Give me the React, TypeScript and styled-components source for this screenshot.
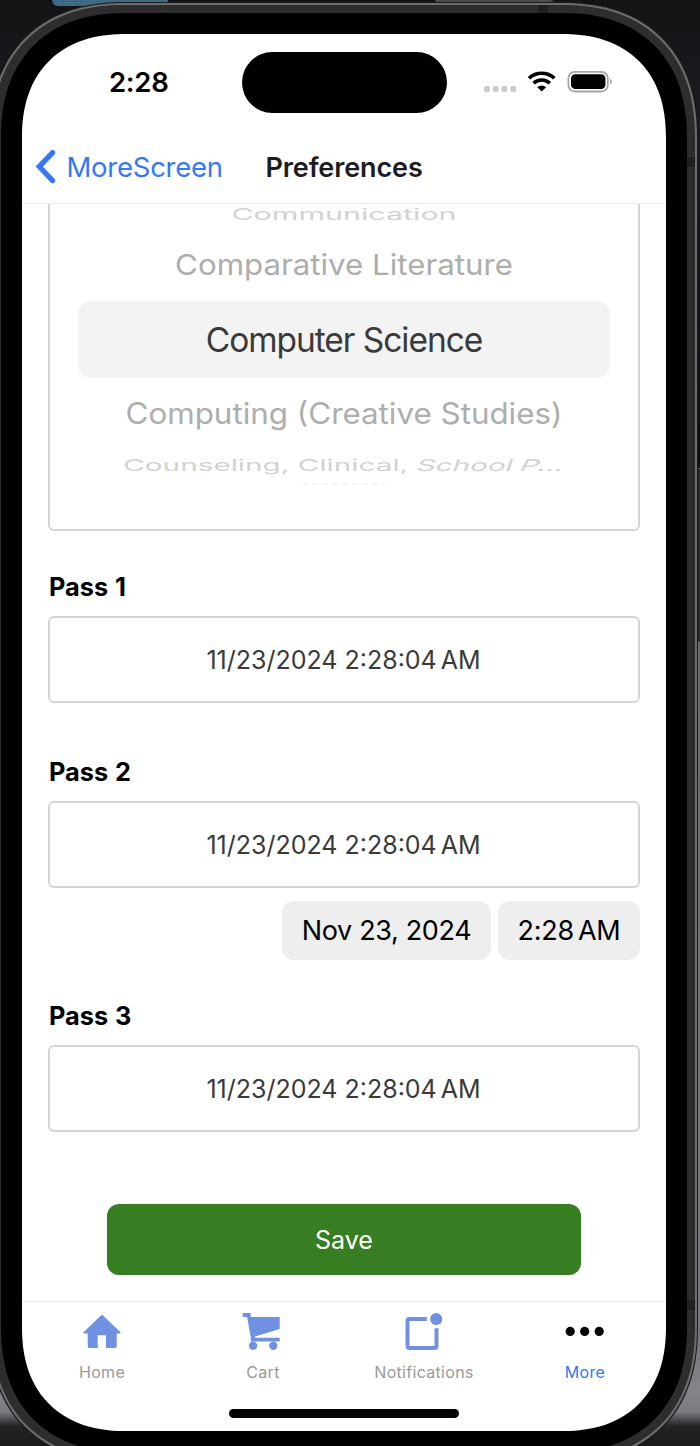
import React from "react";
import styled, { createGlobalStyle } from "styled-components";

const Global = createGlobalStyle`
  * { box-sizing: border-box; }
  html, body { margin: 0; background: #141316; }
  body { font-family: Inter, "Liberation Sans", sans-serif; }
`;

const Desktop = styled.div`
  position: relative;
  width: 700px;
  height: 1446px;
  overflow: hidden;
  background: linear-gradient(180deg, #131215 0, #1b1a1e 100px, #0e0d10 468px, #666 468px, #666 469px, #262626 469px, #262626 641px, #6c6c6c 642px, #77767a 1340px, #858488 1390px, #7b7a7e 1412px, #242226 1426px, #1a191c 1446px);
`;

const Peek = styled.div<{ $x: number; $w: number; $h: number; $c: string }>`
  position: absolute;
  top: 0;
  left: ${(p) => p.$x}px;
  width: ${(p) => p.$w}px;
  height: ${(p) => p.$h}px;
  background: ${(p) => p.$c};
  border-radius: 0 0 6px 6px;
`;

/* Continuous corners where the browser has them, plain arcs otherwise. */
const Rounded = styled.div<{ $arc: number; $smooth: number }>`
  border-radius: ${(p) => p.$arc}px;
  @supports (corner-shape: superellipse(1.2)) {
    border-radius: ${(p) => p.$smooth}px;
    corner-shape: superellipse(1.2);
  }
`;

const Chassis = styled(Rounded)`
  position: relative;
  width: 707px;
  height: 1459px;
  margin: 3px 0 0 -10px;
  border: 2px solid #6c6c6c;
  background: #2d2d2d;
  padding: 8px 8px 8px 9px;
  box-shadow: 0 0 0 1px #1b1b1b;
`;

const Antenna = styled.div<{ $x: number; $y: number; $w: number; $h: number }>`
  position: absolute;
  left: ${(p) => p.$x}px;
  top: ${(p) => p.$y}px;
  width: ${(p) => p.$w}px;
  height: ${(p) => p.$h}px;
  background: #1f1f1f;
`;

const Bezel = styled(Rounded)`
  height: 100%;
  background: #000;
  padding: 21px;
`;

const Screen = styled(Rounded)`
  width: 644px;
  height: 1397px;
  background: #fff;
  overflow: hidden;
  display: flex;
  flex-direction: column;
`;

const StatusBar = styled.div`
  height: 97px;
  flex: none;
  display: flex;
  align-items: flex-start;
  padding-top: 18px;
`;

const Clock = styled.div`
  width: 219.5px;
  padding-left: 87px;
  padding-top: 13px;
  font-size: 27.5px;
  line-height: 34px;
  font-weight: 600;
  letter-spacing: -0.3px;
`;

const Island = styled.div`
  width: 205px;
  height: 61px;
  border-radius: 31px;
  background: #000;
`;

const Signals = styled.svg`
  margin: 17px 0 0 36.5px;
  display: block;
`;

const NavBar = styled.div`
  height: 73px;
  flex: none;
  display: flex;
  align-items: center;
  border-bottom: 1px solid #ebebeb;
  padding: 1px 0 0 13px;
`;

const Back = styled.div`
  display: flex;
  align-items: center;
  width: 230.5px;
  color: #3478f6;
`;

const Txt = styled.span<{ $ls?: number }>`
  white-space: nowrap;
  letter-spacing: ${(p) => p.$ls ?? 0}px;
`;

const BackLabel = styled(Txt)`
  font-size: 27.5px;
  margin: 0 0 1px 10.5px;
`;

const Title = styled(Txt)`
  font-size: 27px;
  font-weight: 600;
  color: #1c1c1e;
`;

const Content = styled.div`
  flex: 1;
  min-height: 0;
  padding: 0 26px;
  display: flex;
  flex-direction: column;
`;

const Picker = styled.div`
  height: 327px;
  border: 2px solid #d5d5d5;
  border-top: 0;
  border-radius: 0 0 6px 6px;
  padding: 0 28px;
  flex: none;
`;

const PickerRow = styled.div<{ $h: number; $size: number; $color: string; $sy: number; $pt?: number }>`
  height: ${(p) => p.$h}px;
  padding-top: ${(p) => p.$pt ?? 0}px;
  font-size: ${(p) => p.$size}px;
  color: ${(p) => p.$color};
  display: flex;
  align-items: center;
  justify-content: center;
  white-space: nowrap;
  line-height: 1;
  > span { transform: scaleY(${(p) => p.$sy}); }
`;

const Selected = styled(PickerRow)`
  background: #f3f3f3;
  border-radius: 13px;
`;

const Slanted = styled.span<{ $deg: number }>`
  display: inline-block;
  white-space: pre;
  transform: skewX(${(p) => -p.$deg}deg);
`;

const WheelEdge = styled.div`
  height: 2px;
  width: 84px;
  margin: 1px auto 0;
  background: repeating-linear-gradient(90deg, #f6f6f6 0 6px, #fff 6px 10px);
`;

const Label = styled.div<{ $top: number }>`
  margin-top: ${(p) => p.$top}px;
  height: 32px;
  line-height: 32px;
  font-size: 25.3px;
  font-weight: 700;
  letter-spacing: 0;
  word-spacing: 1px;
  padding-left: 1px;
`;

const Field = styled.div`
  margin-top: 13px;
  height: 87px;
  flex: none;
  border: 2px solid #d5d5d5;
  border-radius: 6px;
  display: flex;
  align-items: center;
  justify-content: center;
  font-size: 25px;
  padding: 1px 1px 0 0;
  color: #3a3a3a;
`;

const Thin = styled.span`
  margin-left: 4px;
`;

const Chips = styled.div`
  display: flex;
  justify-content: flex-end;
  gap: 7px;
  margin-top: 13px;
`;

const Chip = styled.div<{ $w: number }>`
  width: ${(p) => p.$w}px;
  height: 59px;
  border-radius: 12px;
  background: #eeeeee;
  display: flex;
  align-items: center;
  justify-content: center;
  font-size: 27px;
  padding-top: 1px;
  color: #000;
`;

const Save = styled.button`
  width: 474px;
  height: 71px;
  margin: 72px auto 0;
  flex: none;
  border: 0;
  border-radius: 12px;
  background: #377e22;
  color: #fff;
  font: 400 25px Inter, sans-serif;
`;

const Tabs = styled.div`
  height: 130px;
  flex: none;
  border-top: 1px solid #e8e8e8;
  display: flex;
  flex-wrap: wrap;
  justify-content: center;
  align-content: flex-start;
`;

const Tab = styled.div<{ $active?: boolean }>`
  width: 25%;
  height: 107px;
  display: flex;
  flex-direction: column;
  align-items: center;
  color: ${(p) => (p.$active ? "#3478f6" : "#999")};
  font-size: 16px;
  line-height: 20px;
  letter-spacing: 0.3px;
  padding: 6px 1px 0 0;
  gap: 6px;
  svg { display: block; flex: none; }
`;

const HomeIndicator = styled.div`
  width: 230px;
  height: 9px;
  border-radius: 5px;
  background: #000;
`;

const blue = "#7090e2";

export default function App() {
  return (
    <Desktop>
      <Global />
      <Peek $x={52} $w={116} $h={6} $c="#3f6a85" />
      <Peek $x={435} $w={118} $h={2} $c="#4c4c4e" />
      <Chassis $arc={124} $smooth={135}>
        <Antenna $x={546} $y={0} $w={10} $h={8} />
        <Antenna $x={695} $y={152} $w={8} $h={10} />
        <Antenna $x={695} $y={1295} $w={8} $h={10} />
        <Bezel $arc={114} $smooth={125}>
          <Screen $arc={93} $smooth={104}>
            <StatusBar>
              <Clock>2:28</Clock>
              <Island />
              <Signals width="132" height="26" viewBox="0 0 132 26">
                <g fill="#cbcbcb">
                  <rect x="1" y="17" width="6" height="6" rx="2" />
                  <rect x="9.7" y="17" width="6" height="6" rx="2" />
                  <rect x="18.4" y="17" width="6" height="6" rx="2" />
                  <rect x="27.1" y="17" width="6" height="6" rx="2" />
                </g>
                <g fill="none" stroke="#000" strokeWidth="3.6">
                  <path d="M46 9.2A18.6 18.6 0 0 1 71.4 9.2" />
                  <path d="M50.6 14.2A11.7 11.7 0 0 1 66.8 14.2" />
                </g>
                <path d="M54.3 18.2a6.6 6.6 0 0 1 8.8 0L58.7 22.6z" fill="#000" />
                <rect x="85.4" y="2.9" width="39.4" height="19.6" rx="6.3" fill="none" stroke="#a6a6a6" strokeWidth="1.8" />
                <rect x="88" y="5.3" width="34.4" height="14.8" rx="4.2" />
                <path d="M127 9.8c2.4.8 2.4 5 0 5.8z" fill="#a6a6a6" />
              </Signals>
            </StatusBar>
            <NavBar>
              <Back>
                <svg width="21" height="35" viewBox="0 0 21 35" fill="none" stroke="#3478f6" strokeWidth="5.2" strokeLinecap="round" strokeLinejoin="miter">
                  <path d="M17.6 2.6L4.2 16.6L17.6 30.6" />
                </svg>
                <BackLabel $ls={-0.25}>MoreScreen</BackLabel>
              </Back>
              <Title $ls={-0.12}>Preferences</Title>
            </NavBar>
            <Content>
              <Picker>
                <PickerRow $h={20} $size={30.4} $color="#d2d2d2" $sy={0.53}><span>Communication</span></PickerRow>
                <PickerRow $h={77} $pt={6} $size={31.25} $color="#adadad" $sy={0.93}><span>Comparative Literature</span></PickerRow>
                <Selected $h={77} $pt={2} $size={33.5} $color="#3a3a3a" $sy={1}><Txt $ls={-1.04}>Computer Science</Txt></Selected>
                <PickerRow $h={72} $pt={2} $size={31.35} $color="#adadad" $sy={0.93}><span>Computing (Creative Studies)</span></PickerRow>
                <PickerRow $h={32} $size={29.7} $color="#d2d2d2" $sy={0.54}>
                  <span>Counseling, Clinical, <Slanted $deg={10}>School </Slanted><Slanted $deg={16}>P...</Slanted></span>
                </PickerRow>
                <WheelEdge />
              </Picker>
              <Label $top={40}>Pass 1</Label>
              <Field><Txt>11/23/2024 2:28:04<Thin>AM</Thin></Txt></Field>
              <Label $top={52.5}>Pass 2</Label>
              <Field><Txt>11/23/2024 2:28:04<Thin>AM</Thin></Txt></Field>
              <Chips>
                <Chip $w={209}><Txt $ls={-0.35}>Nov 23, 2024</Txt></Chip>
                <Chip $w={142}><Txt $ls={-0.25}>2:28<Thin>AM</Thin></Txt></Chip>
              </Chips>
              <Label $top={40.5}>Pass 3</Label>
              <Field><Txt>11/23/2024 2:28:04<Thin>AM</Thin></Txt></Field>
              <Save>Save</Save>
            </Content>
            <Tabs>
              <Tab>
                <svg width="48" height="48" viewBox="0 0 48 48" fill={blue}>
                  <path d="M22.9 7.6Q24 6.4 25.1 7.6L42.4 24.2Q43.3 25.5 41.9 25.5H38.7V38.6Q38.7 40 37.3 40H28V27.3H19.7V40H11.1Q9.7 40 9.7 38.6V25.5H6.1Q4.7 25.5 5.6 24.2Z" />
                </svg>
                Home
              </Tab>
              <Tab>
                <svg width="48" height="48" viewBox="0 0 48 48" fill={blue}>
                  <path d="M3.7 5H11.7V9H40.7V21L16 28.5V29.7H40.7V33.5H11.7V29L8.1 9H3.7Z" />
                  <circle cx="14.1" cy="37.7" r="4.2" />
                  <circle cx="34.3" cy="37.7" r="4.2" />
                </svg>
                Cart
              </Tab>
              <Tab>
                <svg width="48" height="48" viewBox="0 0 48 48" fill={blue}>
                  <path d="M26.8 11H9.5Q7.5 11 7.5 13V38Q7.5 40 9.5 40H34.5Q36.5 40 36.5 38V20.3" fill="none" stroke={blue} strokeWidth="4" />
                  <circle cx="36.2" cy="11" r="6.1" />
                </svg>
                Notifications
              </Tab>
              <Tab $active>
                <svg width="48" height="48" viewBox="0 0 48 48" fill="#000">
                  <circle cx="9.2" cy="23.4" r="4.6" />
                  <circle cx="23.7" cy="23.4" r="4.6" />
                  <circle cx="38.2" cy="23.4" r="4.6" />
                </svg>
                More
              </Tab>
              <HomeIndicator />
            </Tabs>
          </Screen>
        </Bezel>
      </Chassis>
    </Desktop>
  );
}
